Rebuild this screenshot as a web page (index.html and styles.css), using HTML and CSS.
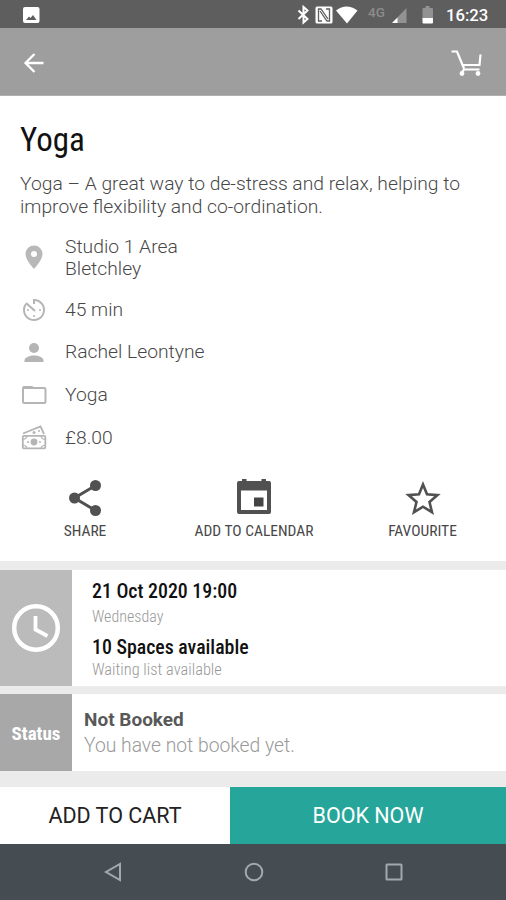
FILE: index.html
```html
<!DOCTYPE html>
<html lang="en">
<head>
<meta charset="utf-8">
<title>Yoga</title>
<link rel="stylesheet" href="styles.css">
</head>
<body>
<div class="screen">
  <div class="statusbar">
    <svg width="506" height="28" viewBox="0 0 506 28">
      <path fill="#fff" fill-rule="evenodd" d="M25 7h12.500q2 0 2 2v12q0 2-2 2H25q-2 0-2-2V9q0-2 2-2zM26 20h10.500l-3.500-5-2.500 3-1.500-1.500z"/>
      <path fill="none" stroke="#fff" stroke-width="2" d="M298.500 10.500l9 8.500-4 3.500V7l4 3.500-9 8.500"/>
      <rect x="315.500" y="6.500" width="17" height="17" rx="1.500" fill="#fff"/>
      <path fill="none" stroke="#5e5e5e" stroke-width="1.300" d="M322 21h-3.500V9h2.500l7 10M326 9h3.500v12h-2.500l-7-10"/>
      <path fill="#fff" d="M336 10.500q10.500-8 21.500 0L347 23.500z"/>
      <path fill="#929292" d="M406.500 8v15H392z"/><path fill="#fff" d="M397.500 17.500V23H392z"/>
      <path fill="#929292" d="M422.500 9q0-1 1-1h2V6h4v2h2.500q1 0 1 1v10h-10.500z"/><path fill="#fff" d="M422.500 18H433v4.500q0 1-1 1h-8.500q-1 0-1-1z"/>
    </svg>
    <span class="network">4G</span>
    <span class="time">16:23</span>
  </div>
  <header class="appbar">
    <svg width="22" height="22" viewBox="0 0 22 22"><path fill="none" stroke="#fff" stroke-width="2.300" d="M20.500 11H3M11.500 2L2.500 11l9 9"/></svg>
    <svg width="32" height="28" viewBox="0 0 32 28"><path fill="none" stroke="#fff" stroke-width="2.200" d="M.5 2.500h5.500L13 19.500M10.500 24L13 20.500H28.500M11.500 16H28.500L29.500 5.500"/><circle cx="11" cy="24.500" r="2.400" fill="#fff"/><circle cx="27" cy="24.500" r="2.400" fill="#fff"/></svg>
  </header>
  <main class="details">
    <h1 class="cond title">Yoga</h1>
    <p class="description">Yoga – A great way to de-stress and relax, helping to<br>improve flexibility and co-ordination.</p>
    <ul class="facts">
      <li class="place"><svg width="28" height="28" viewBox="0 0 28 28"><path fill="#b8b8b8" fill-rule="evenodd" d="M14 2.500a8.500 8.500 0 0 0-8.500 8.500c0 6 8.500 15 8.500 15s8.500-9 8.500-15A8.500 8.500 0 0 0 14 2.500zM14 8a3 3 0 1 1 0 6 3 3 0 0 1 0-6z"/></svg><span>Studio 1 Area<br>Bletchley</span></li>
      <li><svg width="28" height="28" viewBox="0 0 28 28"><path fill="none" stroke="#b5b5b5" stroke-width="2" d="M14 8V4a10 10 0 1 1-8 4"/><path fill="none" stroke="#b5b5b5" stroke-width="2.200" d="M6 7l9 8"/><g fill="#b5b5b5"><circle cx="20" cy="14" r="1"/><circle cx="8" cy="14" r="1"/><circle cx="14" cy="20" r="1"/></g></svg><span>45 min</span></li>
      <li><svg width="28" height="28" viewBox="0 0 28 28"><circle cx="14" cy="9" r="5" fill="#b5b5b5"/><path fill="#b5b5b5" d="M4.500 23v-1.500C4.500 18 10 16.500 14 16.500s9.500 1.500 9.500 5V23z"/></svg><span>Rachel Leontyne</span></li>
      <li><svg width="28" height="28" viewBox="0 0 28 28"><path fill="none" stroke="#b5b5b5" stroke-width="2" d="M4.500 6h7l2 1H24q1.500 0 1.500 1.500v12Q25.500 22 24 22H4.500Q3 22 3 20.500v-13Q3 6 4.500 6z"/><path fill="#b5b5b5" d="M3 5h8.500l3 3H3z"/></svg><span>Yoga</span></li>
      <li><svg width="28" height="28" viewBox="0 0 28 28"><g fill="none" stroke="#b5b5b5" stroke-width="1.800"><rect x="2.800" y="11.800" width="22.500" height="12.500" rx="1"/><path d="M3 9.500L20.500 2.500 24 10"/><path d="M7 12q0 2.500-4 3.500M21 12q0 2.500 4 3.500M7 24.500q0-2.500-4-3.500M21 24.500q0-2.500 4-3.500" stroke-width="1.200"/></g><g fill="#b5b5b5"><circle cx="14" cy="18" r="3.400"/><circle cx="8" cy="18" r="1"/><circle cx="20" cy="18" r="1"/><circle cx="14" cy="8.500" r="1.500"/><circle cx="19" cy="7" r="1"/></g></svg><span>£8.00</span></li>
    </ul>
    <div class="actions">
      <div class="action"><svg width="40" height="40" viewBox="0 0 40 40"><path fill="none" stroke="#515151" stroke-width="3" d="M30.500 7.500L9.500 20l21 12.500"/><g fill="#515151"><circle cx="30.500" cy="7.500" r="5.500"/><circle cx="9.500" cy="20" r="5.500"/><circle cx="30.500" cy="32.500" r="5.500"/></g></svg><span class="cond label">SHARE</span></div>
      <div class="action"><svg width="40" height="40" viewBox="0 0 40 40"><path fill="#515151" fill-rule="evenodd" d="M5 3h3V1H12.500v2h15V1H32v2h3q2 0 2 2v29q0 2-2 2H5q-2 0-2-2V5q0-2 2-2zM7 12.500V32h26V12.500z"/><path fill="#444" d="M20 19.500h9.500v9h-9.500z"/></svg><span class="cond label">ADD TO CALENDAR</span></div>
      <div class="action"><svg width="40" height="40" viewBox="0 0 40 40"><path fill="none" stroke="#515151" stroke-width="2.600" d="M20 6.500l4 9.800 10.500.8-8 6.900 2.500 10.200-9-5.500-9 5.500L13.500 24l-8-6.900L16 16.300z"/></svg><span class="cond label">FAVOURITE</span></div>
    </div>
  </main>
  <section class="card schedule">
    <div class="tile"><svg width="52" height="52" viewBox="0 0 52 52"><circle cx="26" cy="26" r="21.800" fill="none" stroke="#fff" stroke-width="4.500"/><path fill="none" stroke="#fff" stroke-width="3.800" d="M25.500 14v13.500L37.500 34"/></svg></div>
    <div class="info">
      <div class="cond strong">21 Oct 2020 19:00</div>
      <div class="cond note">Wednesday</div>
      <div class="cond strong spaces">10 Spaces available</div>
      <div class="cond note waiting">Waiting list available</div>
    </div>
  </section>
  <section class="card booking">
    <div class="tile dark"><span class="cond">Status</span></div>
    <div class="info">
      <div class="booked">Not Booked</div>
      <div class="message">You have not booked yet.</div>
    </div>
  </section>
  <div class="buttons">
    <div class="button cart">ADD TO CART</div>
    <div class="button book">BOOK NOW</div>
  </div>
  <nav class="navbar">
    <svg width="20" height="20" viewBox="0 0 20 20"><path d="M17 2v16L3 10z"/></svg>
    <svg width="20" height="20" viewBox="0 0 20 20"><circle cx="10" cy="10" r="8.300"/></svg>
    <svg width="20" height="20" viewBox="0 0 20 20"><rect x="2.500" y="2.500" width="15" height="15" rx=".5"/></svg>
  </nav>
</div>
</body>
</html>
```
FILE: styles.css
```css
* { box-sizing: border-box; margin: 0; padding: 0; }
body { font-family: Roboto, "Liberation Sans", sans-serif; background: #ebebeb; color: #484848; }
svg { display: block; flex: none; }
.screen { width: 506px; height: 900px; overflow: hidden; display: flex; flex-direction: column; background: #ebebeb; }
.cond { font-family: "Roboto Condensed", Roboto, sans-serif; font-stretch: 75%; }

.statusbar { position: relative; flex: none; height: 28px; background: #5e5e5e; }
.network { position: absolute; left: 368px; top: 4px; font-size: 13.500px; line-height: 16px; font-weight: 500; color: #8c8c8c; }
.time { position: absolute; left: 446px; top: 5px; font-size: 16.700px; line-height: 22px; font-weight: 500; color: #fff; }

.appbar { flex: none; height: 68px; padding: 2px 23px 0 23px; background: #9e9e9e; border-bottom: 1px solid #b0b0b0; display: flex; align-items: center; justify-content: space-between; }

.details { flex: none; height: 465px; background: #fff; padding: 24px 0 0 20px; }
.title { font-size: 33px; line-height: 40px; font-weight: 400; color: #111; }
.description { margin-top: 13px; font-size: 19.270px; line-height: 22.500px; font-weight: 300; white-space: nowrap; }
.facts { list-style: none; margin-top: 17.500px; }
.facts li { height: 42.800px; display: flex; align-items: center; gap: 17px; font-size: 19.270px; line-height: 22.500px; font-weight: 300; }
.facts .place { height: 53px; align-items: flex-start; }
.place svg { margin-top: 7px; }

.actions { display: grid; grid-template-columns: 130px 208px 129px; padding-top: 18.500px; }
.action { display: flex; flex-direction: column; align-items: center; }
.label { margin-top: 4px; font-size: 15.500px; line-height: 18px; font-weight: 400; white-space: nowrap; }

.card { display: flex; flex: none; background: #fff; }
.schedule { height: 116px; margin-top: 8.500px; }
.booking { height: 77px; margin-top: 8px; }
.tile { width: 72px; background: #bbb; display: flex; align-items: center; justify-content: center; }
.tile.dark { background: #a8a8a8; color: #fff; font-size: 19px; font-weight: 700; padding-top: 3px; }
.schedule .info { padding: 10px 0 0 20px; }
.strong { font-size: 19.850px; line-height: 24px; font-weight: 500; color: #111; }
.note { font-size: 16px; line-height: 20px; margin-top: 3px; color: #999; font-weight: 300; }
.spaces { margin-top: 9px; }
.waiting { margin-top: 0; font-size: 16.400px; }
.booking .info { padding: 14.500px 0 0 12px; }
.booked { font-size: 19px; line-height: 24px; font-weight: 700; color: #585858; }
.message { margin-top: 1px; font-size: 19.300px; line-height: 26px; font-weight: 300; color: #999; }

.buttons { display: flex; flex: none; height: 57px; margin-top: 16px; }
.button { display: flex; align-items: center; justify-content: center; padding-top: 1px; font-size: 21.500px; }
.cart { width: 230px; background: #fff; color: #222; }
.book { flex: 1; background: #26a69a; color: #fff; }
.navbar { flex: 1; background: #454d52; display: flex; justify-content: center; align-items: center; gap: 120.500px; padding-left: 1px; }
.navbar svg { fill: none; stroke: #a3a9ac; stroke-width: 2; }
```
